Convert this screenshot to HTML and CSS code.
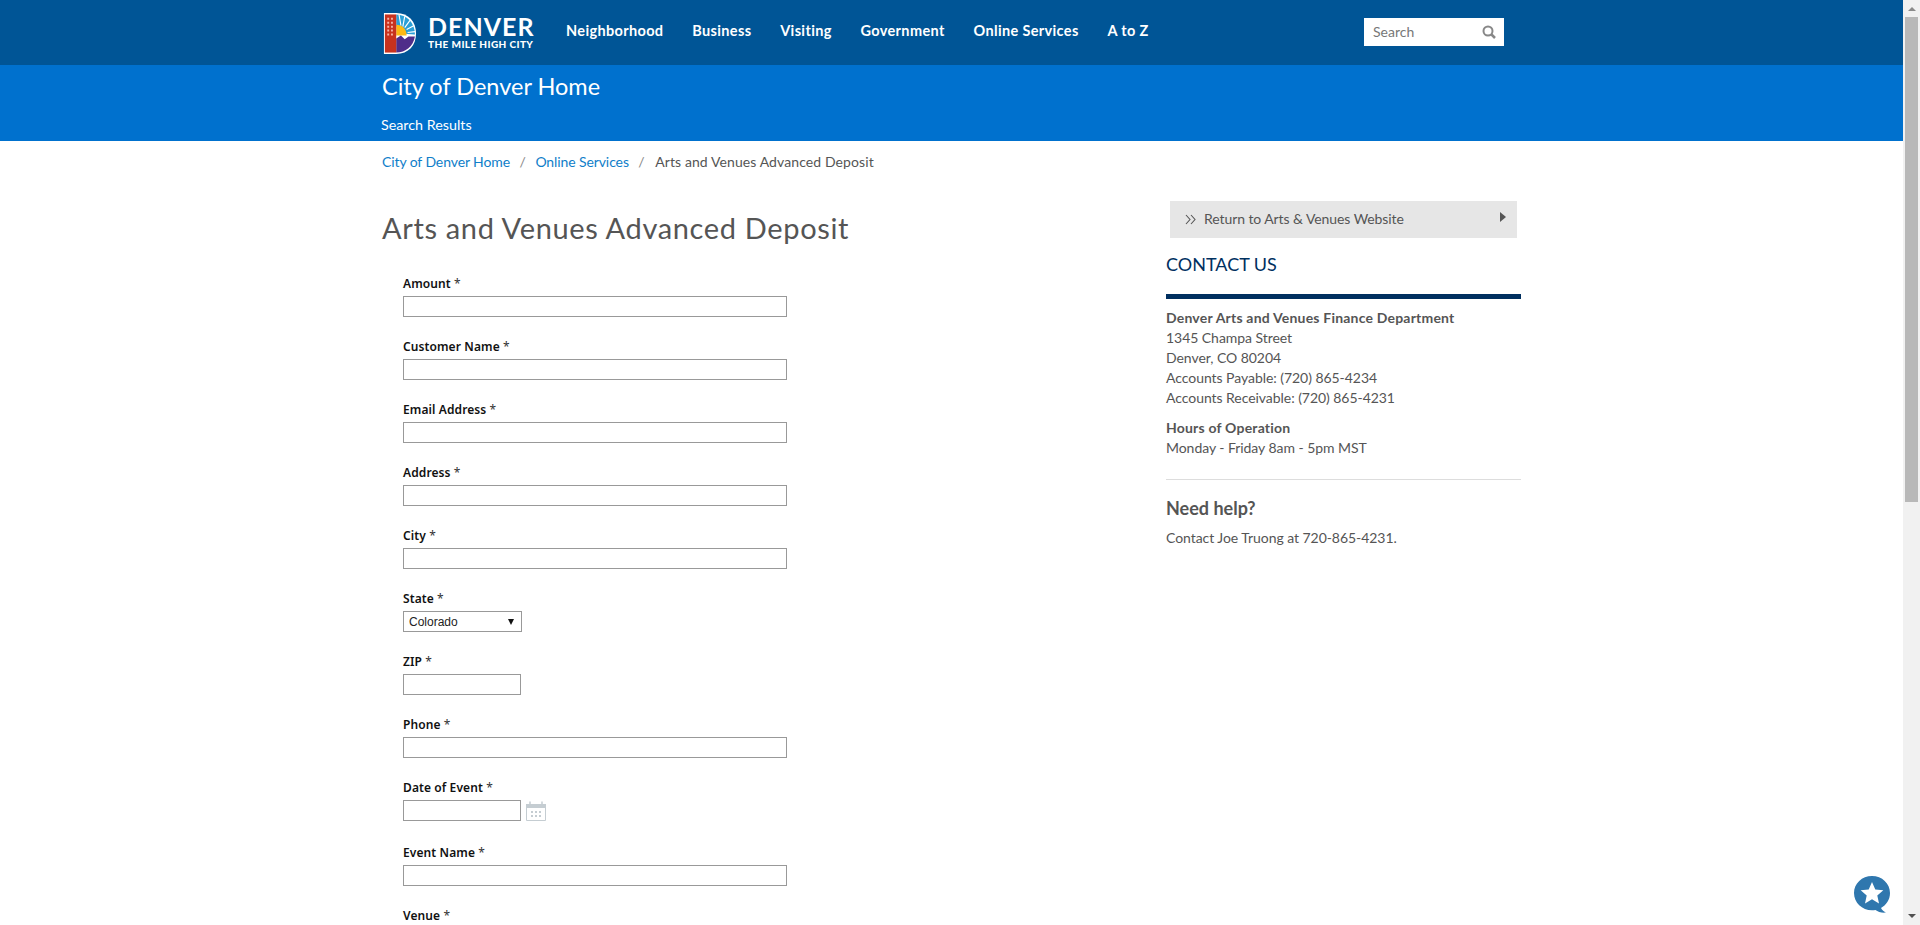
FILE: index.html
```html
<!DOCTYPE html>
<html lang="en">

<head>
    <meta charset="UTF-8">
    <meta name="viewport" content="width=device-width, initial-scale=1.0">
    <title>Arts and Venues Advanced Deposit</title>
    <link rel="stylesheet" href="styles.css">
</head>

<body>

    <header class="topbar">
        <div class="wrap topbar-inner">
            <a class="logo" href="#">
                <svg class="logo-mark" width="34" height="43" viewBox="0 0 36 44" preserveAspectRatio="none">
                    <path d="M1 1H14C27 1 35 10 35 22C35 34 27 43 14 43H1Z" fill="#fff"/>
                    <path d="M14 2.500C25 2.500 33.800 11 33.800 23L19 22L14 14Z" fill="#2a9fd6"/>
                    <path d="M17 3L19 14M23 4.500L21 15M29 8L23 16M32.500 14L25 18M34 20L26 21" stroke="#fff" stroke-width="1.200"/>
                    <path d="M14 13C20 13 25 17 25 24H14Z" fill="#fdb913"/>
                    <path d="M14 41.500V27L19 24L23 28L27 25L33.800 25C32 35 24 41.500 14 41.500Z" fill="#4f2d8a"/>
                    <rect x="2" y="2.500" width="12" height="39" fill="#c8321e"/>
                    <path d="M4.500 6h2v2h-2zM8.500 6h2v2h-2zM4.500 10h2v2h-2zM8.500 10h2v2h-2zM4.500 14h2v2h-2zM8.500 14h2v2h-2zM4.500 18h2v2h-2zM8.500 18h2v2h-2zM4.500 22h2v2h-2zM8.500 22h2v2h-2z" fill="#f3b3a6"/>
                </svg>
                <span class="logo-text">
                    <span class="logo-name">DENVER</span>
                    <span class="logo-tag">THE MILE HIGH CITY</span>
                </span>
            </a>
            <nav class="mainnav">
                <a href="#">Neighborhood</a>
                <a href="#">Business</a>
                <a href="#">Visiting</a>
                <a href="#">Government</a>
                <a href="#">Online Services</a>
                <a href="#">A to Z</a>
            </nav>
            <div class="searchbox">
                <span>Search</span>
                <svg width="14" height="14" viewBox="0 0 14 14">
                    <circle cx="6" cy="6" r="4.500" fill="none" stroke="#888" stroke-width="2"/>
                    <path d="M9 9L13 13" stroke="#888" stroke-width="2.500"/>
                </svg>
            </div>
        </div>
    </header>

    <div class="band">
        <div class="wrap">
            <div class="band-title">City of Denver Home</div>
            <a class="band-link" href="#">Search Results</a>
        </div>
    </div>

    <div class="wrap">
        <div class="breadcrumb">
            <a href="#">City of Denver Home</a>
            <span class="sep">/</span>
            <a href="#">Online Services</a>
            <span class="sep">/</span>
            <span class="current">Arts and Venues Advanced Deposit</span>
        </div>

        <div class="columns">
            <main class="maincol">
                <h1>Arts and Venues Advanced Deposit</h1>
                <form class="depositform">
                    <div class="field"><label>Amount <span class="req">*</span></label><input type="text" class="long"></div>
                    <div class="field"><label>Customer Name <span class="req">*</span></label><input type="text" class="long"></div>
                    <div class="field"><label>Email Address <span class="req">*</span></label><input type="text" class="long"></div>
                    <div class="field"><label>Address <span class="req">*</span></label><input type="text" class="long"></div>
                    <div class="field"><label>City <span class="req">*</span></label><input type="text" class="long"></div>
                    <div class="field"><label>State <span class="req">*</span></label>
                        <div class="fakeselect"><span>Colorado</span><i class="selectarrow"></i></div>
                    </div>
                    <div class="field"><label>ZIP <span class="req">*</span></label><input type="text" class="short"></div>
                    <div class="field"><label>Phone <span class="req">*</span></label><input type="text" class="long"></div>
                    <div class="field datefield"><label>Date of Event <span class="req">*</span></label>
                        <div class="daterow">
                            <input type="text" class="short">
                            <svg width="20" height="20" viewBox="0 0 20 20">
                                <path d="M0.500 3.500H19.500V19.500H0.500Z" fill="#fff" stroke="#c5cdd2"/>
                                <path d="M0 3H20V7H0Z" fill="#c5cdd2"/>
                                <path d="M4 0.500V4M16 0.500V4" stroke="#c5cdd2" stroke-width="1.500"/>
                                <path d="M5 10h2v2H5zM9 10h2v2H9zM13 10h2v2h-2zM5 14h2v2H5zM9 14h2v2H9zM13 14h2v2h-2z" fill="#c5cdd2"/>
                            </svg>
                        </div>
                    </div>
                    <div class="field"><label>Event Name <span class="req">*</span></label><input type="text" class="long"></div>
                    <div class="field"><label>Venue <span class="req">*</span></label><input type="text" class="long"></div>
                </form>
            </main>

            <aside class="sidecol">
                <a class="returnlink" href="#">
                    <svg width="11" height="11" viewBox="0 0 11 11">
                        <path d="M1 1L5 5.500L1 10M6 1L10 5.500L6 10" fill="none" stroke="#555" stroke-width="1.100"/>
                    </svg>
                    <span>Return to Arts &amp; Venues Website</span>
                    <i class="returnarrow"></i>
                </a>
                <h2 class="contact-title">CONTACT US</h2>
                <div class="contact-body">
                    <p><strong>Denver Arts and Venues Finance Department</strong><br>
                        1345 Champa Street<br>
                        Denver, CO 80204<br>
                        Accounts Payable: (720) 865-4234<br>
                        Accounts Receivable: (720) 865-4231</p>
                    <p><strong>Hours of Operation</strong><br>
                        Monday - Friday 8am - 5pm MST</p>
                    <hr>
                    <h3>Need help?</h3>
                    <p>Contact Joe Truong at 720-865-4231.</p>
                </div>
            </aside>
        </div>
    </div>

    <!-- feedback bubble -->
    <div class="feedback">
        <svg width="40" height="40" viewBox="0 0 40 40">
            <path d="M20 1C30 1 38 8.500 38 18C38 25 34 30 29 33C30 35 32 36.500 34 37.500C30 38 26 37 23.500 35C22.500 35.200 21 35.300 20 35.300C10 35.300 2 27.500 2 18C2 8.500 10 1 20 1Z" fill="#2f77ae"/>
            <path d="M20 7L23.300 14.400L31.300 15.200L25.300 20.500L27 28.400L20 24.300L13 28.400L14.700 20.500L8.700 15.200L16.700 14.400Z" fill="#fff"/>
        </svg>
    </div>

    <div class="scrollbar">
        <i class="scroll-up"></i>
        <div class="scroll-thumb"></div>
        <i class="scroll-down"></i>
    </div>

</body>

</html>
```

FILE: styles.css
```css
html, body {
    margin: 0;
    height: 925px;
    overflow: hidden;
    background-color: #fff;
}

body {
    font-family: "Lato", "Liberation Sans", sans-serif;
    font-size: 14px;
    line-height: 20px;
    color: #555;
}

a {
    text-decoration: none;
}

.wrap {
    width: 1139px;
    margin-left: 382px;
}

/* top bar */
.topbar {
    height: 65px;
    background-color: #005596;
}

.topbar-inner {
    display: flex;
    align-items: center;
    height: 65px;
}

.logo {
    display: flex;
    align-items: center;
    color: #fff;
    width: 184px;
    padding-left: 1px;
    box-sizing: border-box;
}

.logo-mark {
    margin-right: 11px;
    margin-top: 1px;
}

.logo-text {
    display: flex;
    flex-direction: column;
}

.logo-name {
    font-size: 25px;
    line-height: 24px;
    font-weight: 700;
    letter-spacing: 1px;
}

.logo-tag {
    font-size: 10px;
    line-height: 13px;
    font-weight: 900;
    letter-spacing: 0.400px;
}

.mainnav {
    display: flex;
    gap: 28.800px;
    margin-top: -3px;
}

.mainnav a {
    color: #fff;
    font-size: 14.500px;
    font-weight: 700;
    letter-spacing: 0.350px;
}

.searchbox {
    position: absolute;
    left: 1364px;
    top: 18px;
    width: 140px;
    height: 28px;
    box-sizing: border-box;
    padding: 0 8px 0 9px;
    background-color: #fff;
    color: #777;
    display: flex;
    align-items: center;
    justify-content: space-between;
}

/* blue band */
.band {
    height: 76px;
    background-color: #0071ce;
    color: #fff;
}

.band-title {
    font-size: 23.500px;
    line-height: 28px;
    padding-top: 7px;
}

.band-link {
    display: block;
    color: #fff;
    font-size: 14.300px;
    margin-top: 15px;
    margin-left: -1px;
}

/* breadcrumb */
.breadcrumb {
    height: 20px;
    padding-top: 11px;
    display: flex;
}

.breadcrumb a {
    color: #0f7ec9;
    letter-spacing: -0.100px;
}

.breadcrumb .current {
    letter-spacing: 0.100px;
    margin-left: 1px;
}

.sep {
    color: #888;
    margin: 0 9.500px;
}

.columns {
    display: flex;
}

.maincol {
    width: 784px;
}

h1 {
    font-size: 29px;
    line-height: 36px;
    font-weight: 400;
    margin: 38px 0 0;
    letter-spacing: 0.650px;
}

.depositform {
    padding: 30px 0 0 21px;
}

.field {
    height: 63px;
}

.field label {
    display: block;
    height: 20px;
    font-family: "Noto Sans", "DejaVu Sans", sans-serif;
    font-size: 12px;
    font-weight: 600;
    line-height: 15px;
    letter-spacing: 0.100px;
    color: #111;
}

.req {
    font-weight: 400;
    color: #333;
}

.datefield {
    height: 65px;
}

input {
    display: block;
    height: 21px;
    box-sizing: border-box;
    margin: 0;
    padding: 1px 3px;
    border: 1px solid #999;
    background-color: #fff;
}

.long {
    width: 384px;
}

.short {
    width: 118px;
}

.fakeselect {
    width: 119px;
    height: 21px;
    box-sizing: border-box;
    border: 1px solid #999;
    padding: 0 7px 0 5px;
    display: flex;
    align-items: center;
    justify-content: space-between;
    font-family: "Liberation Sans", sans-serif;
    font-size: 12px;
    color: #222;
}

.selectarrow {
    border-left: 3px solid transparent;
    border-right: 3px solid transparent;
    border-top: 6px solid #111;
}

.daterow {
    display: flex;
    align-items: center;
    gap: 5px;
}

/* sidebar */
.sidecol {
    width: 355px;
}

.returnlink {
    display: flex;
    align-items: center;
    width: 347px;
    height: 37px;
    box-sizing: border-box;
    margin: 29px 0 0 4px;
    padding: 0 11px 0 15px;
    background-color: #e6e6e6;
    color: #555;
}

.returnlink span {
    margin-left: 8px;
    flex: 1;
    letter-spacing: -0.080px;
    margin-bottom: 2px;
}

.returnarrow {
    margin-bottom: 5px;
    border-top: 5px solid transparent;
    border-bottom: 5px solid transparent;
    border-left: 6px solid #555;
}

.contact-title {
    margin: 13px 0 0;
    height: 43px;
    border-bottom: 5px solid #002f5f;
    font-size: 18px;
    line-height: 26px;
    font-weight: 400;
    color: #00305f;
}

.contact-body {
    padding-top: 9px;
}

.contact-body p {
    margin: 0 0 10px;
    letter-spacing: -0.050px;
}

.contact-body strong {
    font-weight: 700;
    letter-spacing: 0.200px;
}

.contact-body hr {
    border: 0;
    border-top: 1px solid #ddd;
    margin: 21px 0 0;
}

h3 {
    font-size: 18px;
    line-height: 24px;
    font-weight: 700;
    margin: 16px 0 8px;
}

/* floating stuff */
.feedback {
    position: fixed;
    left: 1852px;
    top: 875px;
    width: 40px;
    height: 40px;
}

.scrollbar {
    position: fixed;
    top: 0;
    right: 0;
    width: 17px;
    height: 925px;
    background-color: #f1f1f1;
}

.scroll-thumb {
    position: absolute;
    left: 2px;
    top: 17px;
    width: 13px;
    height: 485px;
    background-color: #b8b8b8;
}

.scroll-up {
    position: absolute;
    left: 5px;
    top: 7px;
    border-left: 4px solid transparent;
    border-right: 4px solid transparent;
    border-bottom: 4px solid #8a8a8a;
}

.scroll-down {
    position: absolute;
    left: 5px;
    bottom: 7px;
    border-left: 4px solid transparent;
    border-right: 4px solid transparent;
    border-top: 4px solid #505050;
}
```
